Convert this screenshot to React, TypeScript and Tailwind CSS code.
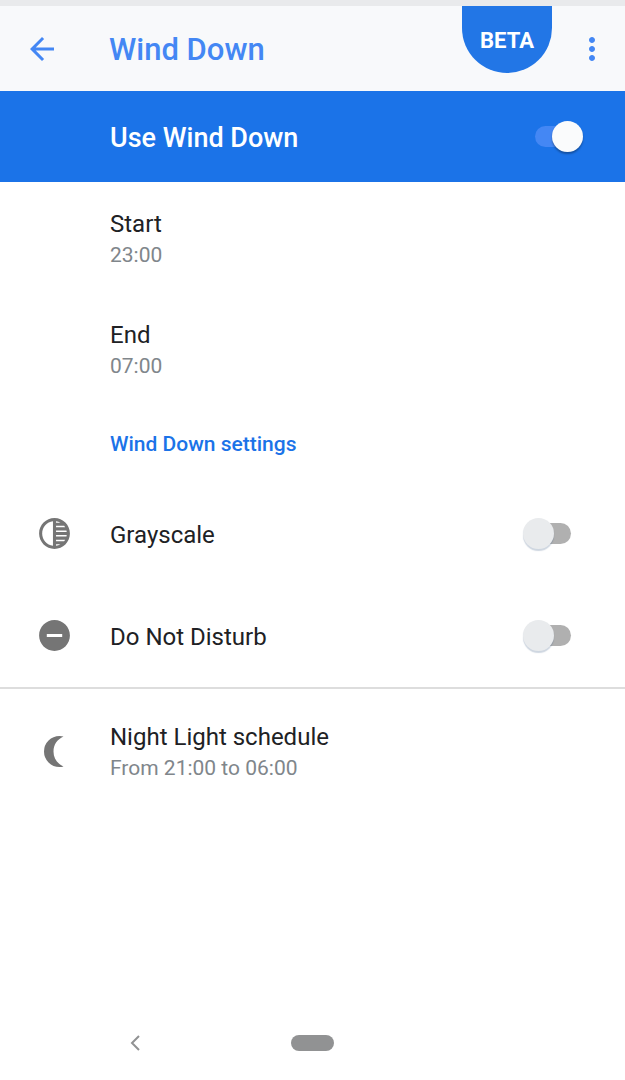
import React from 'react';
import { MdArrowBack, MdMoreVert, MdRemoveCircle, MdTonality } from 'react-icons/md';

interface SwitchRowProps {
  id: string;
  label: string;
  icon: React.ReactNode;
}

interface InfoRowProps {
  title: string;
  detail: string;
}

const Moon: React.FC = () => (
  <svg viewBox="0 0 20 31" fill="currentColor" className="h-[31px] w-5" aria-hidden="true">
    <path d="M19.500 0.600C18.300 0.200 17 0 15.500 0a15.500 15.500 0 0 0 0 31c1.500 0 2.800-.2 4-.6C13 27.500 9.500 22 9.500 15.500S13 3.500 19.500 .6z" />
  </svg>
);

const Switch: React.FC<{ id: string; on?: boolean }> = ({ id, on = false }) => (
  <input
    id={id}
    type="checkbox"
    role="switch"
    defaultChecked={on}
    className="relative h-[31px] w-12 shrink-0 cursor-pointer appearance-none before:absolute before:top-[5px] before:right-0 before:h-[21px] before:w-[43px] before:rounded-full before:bg-[#b0b0b0] after:absolute after:top-0 after:left-0 after:size-[31px] after:rounded-full after:bg-[#e9ebed] after:shadow-[0_2px_1px_rgba(60,90,130,0.25)] checked:before:right-auto checked:before:left-0 checked:before:bg-[#4487f4] checked:after:right-0 checked:after:left-auto checked:after:bg-[#fafbfc] checked:after:shadow-[0_2px_2px_rgba(0,0,0,0.3)]"
  />
);

const RowText: React.FC<InfoRowProps> = ({ title, detail }) => (
  <span className="block">
    <span className="block text-2xl leading-[31px] text-[#202124]">{title}</span>
    <span className="block text-[21px] leading-[31px] text-[#80868b]">{detail}</span>
  </span>
);

const TimeRow: React.FC<InfoRowProps> = ({ title, detail }) => (
  <button type="button" className="block w-full cursor-pointer pt-[27px] pb-[22px] pl-[110px] text-left">
    <RowText title={title} detail={detail} />
  </button>
);

const SwitchRow: React.FC<SwitchRowProps> = ({ id, label, icon }) => (
  <div className="flex h-[102px] items-center pr-[54px]">
    <span className="flex w-[110px] justify-center pr-px text-[#757575]">{icon}</span>
    <label htmlFor={id} className="flex-1 cursor-pointer pt-1 text-2xl text-[#202124]">
      {label}
    </label>
    <Switch id={id} />
  </div>
);

const App: React.FC = () => {
  return (
    <div className="flex min-h-screen flex-col bg-white font-['Roboto',sans-serif]">
      <div className="h-[6px] bg-[#e9eaec]" />

      <header className="relative flex h-[85px] items-center bg-[#f8f9fb] pr-[15px] text-[#4487f4]">
        <button type="button" aria-label="Back" className="flex w-[84px] cursor-pointer justify-center">
          <MdArrowBack className="size-9" />
        </button>
        <h1 className="flex-1 pt-1 pl-[25px] text-[31px] font-medium">Wind Down</h1>
        <span className="absolute top-0 right-[73px] flex h-[67px] w-[90px] items-center justify-center rounded-b-[45px] bg-[#2276e6] pt-0.5 text-[22px] font-bold text-white">
          BETA
        </span>
        <button type="button" aria-label="More options" className="cursor-pointer">
          <MdMoreVert className="size-9" />
        </button>
      </header>

      <div className="flex h-[91px] items-center bg-[#1b73e8] pr-[42px] pl-[110px]">
        <label htmlFor="wind-down" className="flex-1 cursor-pointer pt-1 text-[27px] font-medium text-white">
          Use Wind Down
        </label>
        <Switch id="wind-down" on />
      </div>

      <main>
        <TimeRow title="Start" detail="23:00" />
        <TimeRow title="End" detail="07:00" />

        <h2 className="flex h-[78px] items-center pt-1 pl-[110px] text-[21px] font-medium text-[#1b73e8]">
          Wind Down settings
        </h2>
        <SwitchRow id="grayscale" label="Grayscale" icon={<MdTonality className="size-[37px]" />} />
        <SwitchRow id="dnd" label="Do Not Disturb" icon={<MdRemoveCircle className="size-[37px]" />} />

        <hr className="mt-px border-t-2 border-[#dddddd]" />

        <button type="button" className="flex w-full cursor-pointer items-center pt-[33px] pb-6 text-left">
          <span className="flex w-[110px] justify-center pr-0.5 pb-1 text-[#757575]">
            <Moon />
          </span>
          <RowText title="Night Light schedule" detail="From 21:00 to 06:00" />
        </button>
      </main>

      <nav className="mt-auto grid h-[74px] grid-cols-[1fr_43px_1fr] items-center">
        <button type="button" aria-label="System back" className="flex cursor-pointer justify-center pr-[22px] text-[#919293]">
          <svg viewBox="0 0 10 16" fill="none" stroke="currentColor" strokeWidth="2" className="h-4 w-[10px]">
            <path d="M9 1L2 8l7 7" />
          </svg>
        </button>
        <button type="button" aria-label="Home" className="h-4 cursor-pointer rounded-full bg-[#919293]" />
      </nav>
    </div>
  );
};

export default App;
